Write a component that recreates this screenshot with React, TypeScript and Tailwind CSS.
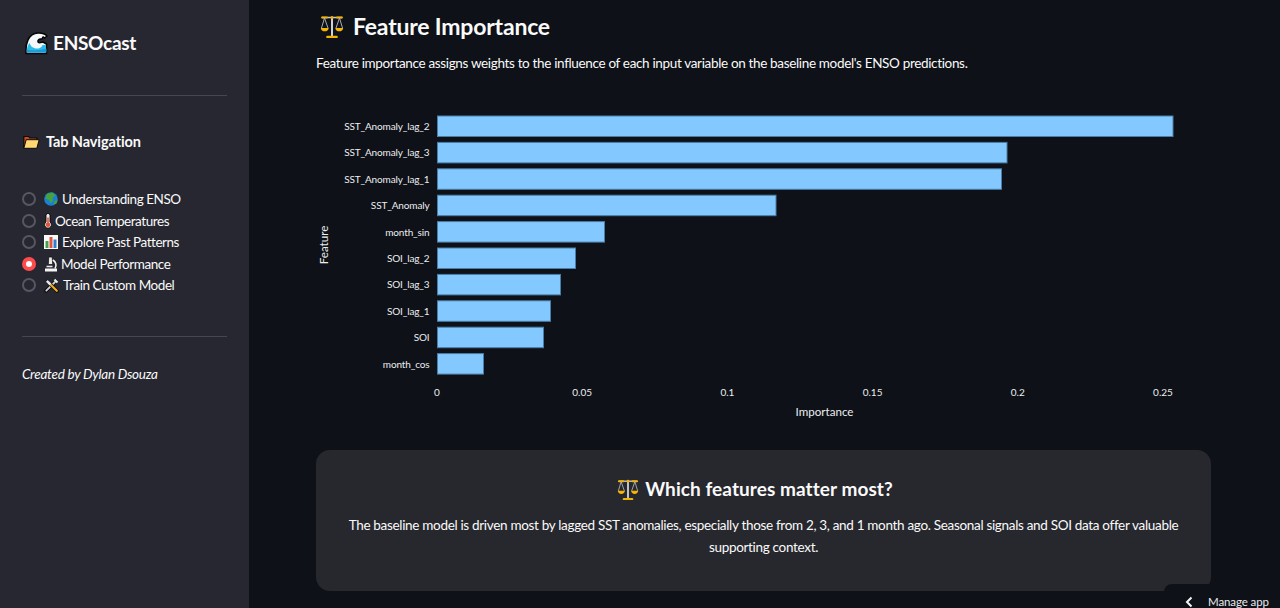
import React from "react";

const font = { fontFamily: 'Lato, sans-serif' };

const Wave = () => (
  <svg width="23" height="23" viewBox="0 0 23 23" className="shrink-0">
    <path d="M1 21.5C.3 12 3 1.500 13 1c3.500-.2 7 .8 9 3l-2.500 2-1.500-1-1 2-2 0c-2 .5-2.500 2.500-1.500 3.500 1 .8 3-.2 4.500-.5l3.500 2v9.500z" fill="#f4f8fa" stroke="#050505" strokeWidth="1.600" strokeLinejoin="round" />
    <path d="M2 20.500c-.4-4 .5-7 2.500-9.500 1 3 3 5 6 5.500 3 .4 6-.5 7-3.500l3.500 0v7.500z" fill="#2bbbe8" />
    <path d="M2 20.500v-3c5 1.500 13 1 19.500-1v4z" fill="#1a9ad6" />
  </svg>
);
const Folder = () => (
  <svg width="17" height="14" viewBox="0 0 17 14" className="shrink-0">
    <path d="M.8 13V1.500h5l1 1.500h7v3" fill="#c9481c" stroke="#0a0a0a" strokeWidth="1.200" />
    <path d="M.8 13.300 3.200 4.700h13l-2.400 8.600z" fill="#ffd873" stroke="#0a0a0a" strokeWidth="1" strokeLinejoin="round" />
  </svg>
);
const Globe = () => (
  <svg width="14" height="14" viewBox="0 0 14 14" className="shrink-0">
    <circle cx="7" cy="7" r="6.800" fill="#1a80d6" />
    <path d="M3 1.800 8.500.6 11.500 3.500 8.500 6 9 9 6.500 11 5 8 1.200 6.500zM10.500 9l3-1-1 3.500-2.500 1z" fill="#46a33a" />
  </svg>
);
const Thermo = () => (
  <svg width="8" height="16" viewBox="0 0 8 16" className="shrink-0">
    <path d="M2 9V2.400a2 2 0 0 1 4 0V9a3.400 3.400 0 1 1-4 0z" fill="#f1eded" stroke="#0a0a0a" strokeWidth=".9" />
    <path d="M3.200 4.500h1.600V10h-1.600z" fill="#e5533f" />
    <circle cx="4" cy="11.800" r="2.300" fill="#e5533f" />
  </svg>
);
const Chart = () => (
  <svg width="14" height="14" viewBox="0 0 14 14" className="shrink-0">
    <rect x="0" y="0" width="14" height="14" fill="#fafafa" />
    <rect x="1.500" y="6" width="3" height="7" fill="#3fa34d" />
    <rect x="5.500" y="2" width="3" height="11" fill="#e5533c" />
    <rect x="9.500" y="4.500" width="3" height="8.500" fill="#2f7fd1" />
  </svg>
);
const Micro = () => (
  <svg width="14" height="16" viewBox="0 0 14 16" className="shrink-0">
    <path d="M1 14h12" stroke="#f5f5f5" strokeWidth="3" />
    <path d="M4.800 1h3.400l.5 7.500H4.300z" fill="#ededed" stroke="#0a0a0a" strokeWidth=".7" />
    <path d="M8.800 4c3.400 1.800 4 6 2.200 8.500" fill="none" stroke="#f3f3f3" strokeWidth="1.600" />
    <path d="M2.500 10.500h6" stroke="#e4e4e4" strokeWidth="1.600" />
  </svg>
);
const Tools = () => (
  <svg width="15" height="15" viewBox="0 0 15 15" className="shrink-0">
    <path d="M2 13 12 3" stroke="#0a0a0a" strokeWidth="3.400" strokeLinecap="round" />
    <path d="M2.300 12.700 11 4" stroke="#cdd2d6" strokeWidth="1.800" strokeLinecap="round" />
    <path d="M13 13 3.500 3.500" stroke="#0a0a0a" strokeWidth="3.400" strokeLinecap="round" />
    <path d="M12.800 12.800 7 7" stroke="#f5aa1f" strokeWidth="2.200" strokeLinecap="round" />
    <path d="M6.500 6.500 2.800 2.800" stroke="#e6e8ea" strokeWidth="2.600" />
    <path d="M10.500 1.500l3 3" stroke="#e6e8ea" strokeWidth="2.200" />
  </svg>
);
const Scales = ({ s = 24 }: { s?: number }) => (
  <svg width={s} height={s} viewBox="0 0 24 24" className="shrink-0">
    <path d="M12 3v20" stroke="#cfd2d5" strokeWidth="2" />
    <path d="M2 3.500h20" stroke="#c9cbce" strokeWidth="1.500" />
    <path d="M2 3.500h5M17 3.500h5" stroke="#f5b301" strokeWidth="2" strokeLinecap="round" />
    <path d="M7.500 23h9" stroke="#f5b301" strokeWidth="2.600" strokeLinecap="round" />
    <circle cx="12" cy="3.500" r="1.600" fill="#f5b301" />
    <path d="M4.500 4 1.500 14M4.500 4l3.500 10M19.500 4 16 14M19.500 4l3 10" stroke="#b9bcbf" strokeWidth=".9" fill="none" />
    <path d="M.8 14h7.900a4 4 0 0 1-7.900 0zM15.300 14h7.900a4 4 0 0 1-7.900 0z" fill="#f7b500" />
  </svg>
);

const navItems: { label: string; icon: React.ReactNode; active?: boolean; gap: string }[] = [
  { label: "Understanding ENSO", icon: <Globe />, gap: "gap-[4px]" },
  { label: "Ocean Temperatures", icon: <Thermo />, gap: "gap-[3px]" },
  { label: "Explore Past Patterns", icon: <Chart />, gap: "gap-[4px]" },
  { label: "Model Performance", icon: <Micro />, active: true, gap: "gap-[3px]" },
  { label: "Train Custom Model", icon: <Tools />, gap: "gap-[4px]" },
];

const bars: [string, number][] = [
  ["SST_Anomaly_lag_2", 1173],
  ["SST_Anomaly_lag_3", 1007],
  ["SST_Anomaly_lag_1", 1001.5],
  ["SST_Anomaly", 776],
  ["month_sin", 604.5],
  ["SOI_lag_2", 575.5],
  ["SOI_lag_3", 560.5],
  ["SOI_lag_1", 550.5],
  ["SOI", 543.5],
  ["month_cos", 483.5],
];
const ticks: [string, number][] = [
  ["0", 437],
  ["0.05", 582.2],
  ["0.1", 727.4],
  ["0.15", 872.6],
  ["0.2", 1017.8],
  ["0.25", 1163],
];

const FeatureChart = () => (
  <svg width="895" height="340" viewBox="316 100 895 340" className="block" style={font}>
    {bars.map(([name, end], i) => {
      const y = 116 + i * 26.4;
      return (
        <g key={name}>
          <rect x="437.5" y={y} width={end - 437.5} height="20.5" fill="#83c9ff" stroke="#4a7ea6" strokeWidth="1" />
          <text x="429.5" y={y + 14} textAnchor="end" fontSize="10" letterSpacing="-0.13" fill="#eceef0">{name}</text>
        </g>
      );
    })}
    {ticks.map(([t, x]) => (
      <text key={t} x={x} y="395.5" textAnchor="middle" fontSize="10" fill="#eceef0">{t}</text>
    ))}
    <text x="824.5" y="416" textAnchor="middle" fontSize="11.6" fill="#eceef0">Importance</text>
    <text transform="translate(328 245) rotate(-90)" x="0" y="0" textAnchor="middle" fontSize="11.6" fill="#eceef0">Feature</text>
  </svg>
);

export default function App() {
  return (
    <div className="flex h-[608px] w-[1280px] overflow-hidden bg-[#0e1117] text-[#fafafa] relative" style={font}>
      <aside className="w-[249px] shrink-0 bg-[#262730] px-[22px] flex flex-col">
        <div className="flex items-center gap-[5px] mt-[29px] h-[28px] pl-[3px]">
          <Wave />
          <span className="text-[19px] font-bold leading-[28px] tracking-[-0.3px]">ENSOcast</span>
        </div>
        <div className="h-px bg-[#45464f] mt-[38px]" />
        <div className="flex items-center gap-[6px] mt-[36px] h-[20px] pl-[1px]">
          <Folder />
          <span className="text-[14.5px] font-bold tracking-[-0.1px]">Tab Navigation</span>
        </div>
        <div className="flex flex-col mt-[36.5px]">
          {navItems.map((n) => (
            <div key={n.label} className="flex items-center h-[21.5px] text-[13.5px] tracking-[-0.45px] text-[#fafafa]">
              <span className={`w-[14px] h-[14px] rounded-full mr-[7px] flex items-center justify-center shrink-0 ${n.active ? "bg-[#ff4b4b]" : "border-2 border-[#565760] bg-[#262730]"}`}>
                {n.active && <span className="w-[6px] h-[6px] rounded-full bg-white" />}
              </span>
              <span className={`flex items-center pl-[1px] ${n.gap}`}>
                {n.icon}
                <span>{n.label}</span>
              </span>
            </div>
          ))}
        </div>
        <div className="h-px bg-[#45464f] mt-[40px]" />
        <p className="italic text-[13.5px] tracking-[-0.25px] mt-[27px] text-[#fafafa]">Created by Dylan Dsouza</p>
      </aside>
      <main className="flex-1 pl-[67px] pr-[69px] min-w-0">
        <div className="flex items-center gap-[9px] mt-[14px] h-[24px] pl-[4px]">
          <Scales />
          <h1 className="text-[23px] font-bold leading-[24px] tracking-[-0.2px]">Feature Importance</h1>
        </div>
        <p className="mt-[15px] text-[13.5px] leading-[20px] tracking-[-0.34px] whitespace-nowrap">
          Feature importance assigns weights to the influence of each input variable on the baseline model's ENSO predictions.
        </p>
        <div className="mt-[27px]">
          <FeatureChart />
        </div>
        <div className="mt-[10px] h-[141px] rounded-[14px] bg-[#27282e] flex flex-col items-center px-[30px] pt-[27px]">
          <div className="flex items-center gap-[6px] h-[24px] mr-[17px]">
            <Scales s={22} />
            <h2 className="text-[19px] font-bold tracking-[0.07px]">Which features matter most?</h2>
          </div>
          <p className="mt-[13px] text-[13.5px] leading-[22px] tracking-[-0.32px] text-center">
            The baseline model is driven most by lagged SST anomalies, especially those from 2, 3, and 1 month ago. Seasonal signals and SOI data offer valuable supporting context.
          </p>
        </div>
      </main>
      <div className="absolute right-0 bottom-0 w-[116px] h-[24px] bg-[#0e1117] rounded-tl-[8px] flex items-end text-[11.5px] tracking-[-0.1px] text-[#e8eaed]">
        <svg width="8" height="12" viewBox="0 0 8 12" className="ml-[21px]"><path d="M6.5 1.5 2 6l4.500 4.500" fill="none" stroke="#f5f5f5" strokeWidth="2" /></svg>
        <span className="ml-[15px] leading-[13px] whitespace-nowrap">Manage app</span>
      </div>
    </div>
  );
}
